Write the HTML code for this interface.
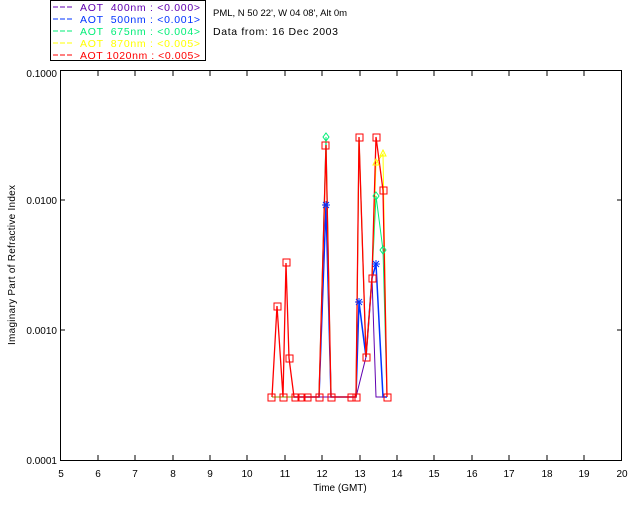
<!DOCTYPE html>
<html><head><style>
body{margin:0;background:#fff;}
svg{display:block;font-family:"Liberation Sans",sans-serif;}
</style></head><body>
<svg width="640" height="512" viewBox="0 0 640 512" xmlns="http://www.w3.org/2000/svg">
<rect x="50.5" y="0.5" width="155" height="60" fill="#fff" stroke="#000"/>
<g font-size="10.5" style="white-space:pre">
<line x1="53" y1="7" x2="73" y2="7" stroke="#6000b0" stroke-dasharray="5,2"/>
<text x="80" y="11" fill="#6000b0" textLength="120" xml:space="preserve">AOT  400nm : &lt;0.000&gt;</text>
<line x1="53" y1="19" x2="73" y2="19" stroke="#0033ff" stroke-dasharray="5,2"/>
<text x="80" y="23" fill="#0033ff" textLength="120" xml:space="preserve">AOT  500nm : &lt;0.001&gt;</text>
<line x1="53" y1="31" x2="73" y2="31" stroke="#00ee77" stroke-dasharray="5,2"/>
<text x="80" y="35" fill="#00ee77" textLength="120" xml:space="preserve">AOT  675nm : &lt;0.004&gt;</text>
<line x1="53" y1="43" x2="73" y2="43" stroke="#ffff00" stroke-dasharray="5,2"/>
<text x="80" y="47" fill="#ffff00" textLength="120" xml:space="preserve">AOT  870nm : &lt;0.005&gt;</text>
<line x1="53" y1="55" x2="73" y2="55" stroke="#ff0000" stroke-dasharray="5,2"/>
<text x="80" y="59" fill="#ff0000" textLength="120" xml:space="preserve">AOT 1020nm : &lt;0.005&gt;</text>
</g>
<text x="213" y="16" font-size="9.5">PML, N 50 22', W 04 08', Alt 0m</text>
<text x="213" y="35" font-size="10.5" textLength="125">Data from: 16 Dec 2003</text>
<rect x="60.5" y="70.5" width="561" height="390" fill="none" stroke="#000"/>
<g stroke="#000">
<path d="M60 200h5M60 330h5M622 200h-5M622 330h-5"/>
<path d="M98 460v-5M135 460v-5M173 460v-5M210 460v-5M247 460v-5M285 460v-5M322 460v-5M360 460v-5M397 460v-5M434 460v-5M472 460v-5M509 460v-5M547 460v-5M584 460v-5"/>
<path d="M98 71v5M135 71v5M173 71v5M210 71v5M247 71v5M285 71v5M322 71v5M360 71v5M397 71v5M434 71v5M472 71v5M509 71v5M547 71v5M584 71v5"/>
</g>
<g font-size="10" text-anchor="end">
<text x="57" y="77">0.1000</text><text x="57" y="204">0.0100</text><text x="57" y="334">0.0010</text><text x="57" y="464">0.0001</text>
</g>
<g font-size="10" text-anchor="middle">
<text x="61" y="477">5</text><text x="98" y="477">6</text><text x="135" y="477">7</text><text x="173" y="477">8</text><text x="210" y="477">9</text><text x="247" y="477">10</text><text x="285" y="477">11</text><text x="322" y="477">12</text><text x="360" y="477">13</text><text x="397" y="477">14</text><text x="434" y="477">15</text><text x="472" y="477">16</text><text x="509" y="477">17</text><text x="547" y="477">18</text><text x="584" y="477">19</text><text x="622" y="477">20</text>
<text x="340" y="491">Time (GMT)</text>
</g>
<text transform="translate(15,265) rotate(-90)" font-size="10" text-anchor="middle" textLength="160">Imaginary Part of Refractive Index</text>
<g fill="none">
<polyline stroke="#6000b0" points="272,397 351,397 356,397 366,357 372,278 376,397 387,397"/>
<polyline stroke="#0033ff" stroke-width="1.5" points="272,397 319,397 326,205 331,397 351,397 356,397 359,302 366,357 372,278 376,264 383,397 387,397"/>
<polyline stroke="#00ee77" points="272,397 319,397 326,137 331,397 351,397 356,397 359,137 366,357 372,278 376,196 383,250 387,397"/>
<polyline stroke="#ffff00" points="272,397 319,397 326,150 331,397 351,397 356,397 359,137 366,357 372,278 376,163 383,154 387,397"/>
<polyline stroke="#ff0000" stroke-width="1.3" points="272,397 277,306 283,397 286,263 289,358 294,397 319,397 326,145 331,397 351,397 356,397 359,137 366,357 372,278 376,137 383,190 387,397"/>
<g stroke="#ff0000">
<rect x="268" y="394" width="7" height="7"/><rect x="274" y="303" width="7" height="7"/><rect x="280" y="394" width="7" height="7"/><rect x="283" y="259" width="7" height="7"/><rect x="286" y="355" width="7" height="7"/><rect x="292" y="394" width="7" height="7"/><rect x="298" y="394" width="7" height="7"/><rect x="304" y="394" width="7" height="7"/><rect x="316" y="394" width="7" height="7"/><rect x="322" y="142" width="7" height="7"/><rect x="328" y="394" width="7" height="7"/><rect x="348" y="394" width="7" height="7"/><rect x="353" y="394" width="7" height="7"/><rect x="356" y="134" width="7" height="7"/><rect x="363" y="354" width="7" height="7"/><rect x="369" y="275" width="7" height="7"/><rect x="373" y="134" width="7" height="7"/><rect x="380" y="187" width="7" height="7"/><rect x="384" y="394" width="7" height="7"/>
</g>
<g stroke="#0033ff"><path d="M322 205h8M326 201v8M323 202l6 6M329 202l-6 6M355 302h8M359 298v8M356 299l6 6M362 299l-6 6M372 264h8M376 260v8M373 261l6 6M379 261l-6 6"/></g>
<g stroke="#00ee77"><path d="M326 133l3 4-3 4-3-4zM376 192l3 4-3 4-3-4zM383 246l3 4-3 4-3-4z"/></g>
<g stroke="#ffff00"><path d="M376 159l3 6h-6zM383 150l3 6h-6z"/></g>
</g>
</svg>
</body></html>
